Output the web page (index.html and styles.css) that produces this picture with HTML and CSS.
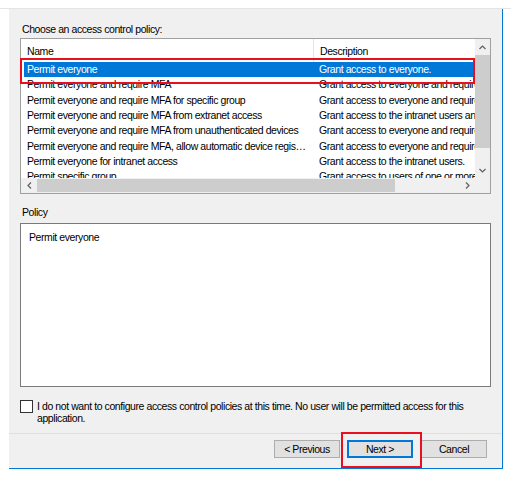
FILE: index.html
```html
<!DOCTYPE html>
<html>
<head>
<meta charset="utf-8">
<title>Access control policy</title>
<link rel="stylesheet" href="styles.css">
</head>
<body>
<div class="page">
  <div class="panel">
    <div class="content">
      <div class="label">Choose an access control policy:</div>
      <div class="list">
        <div class="list-view">
          <div class="header">
            <div class="cell name">Name</div>
            <div class="cell desc divider">Description</div>
          </div>
          <div class="row selected">
            <div class="cell name">Permit everyone</div>
            <div class="cell desc">Grant access to everyone.</div>
          </div>
          <div class="row">
            <div class="cell name">Permit everyone and require MFA</div>
            <div class="cell desc">Grant access to everyone and require MFA.</div>
          </div>
          <div class="row">
            <div class="cell name">Permit everyone and require MFA for specific group</div>
            <div class="cell desc">Grant access to everyone and require MFA for specific group.</div>
          </div>
          <div class="row">
            <div class="cell name">Permit everyone and require MFA from extranet access</div>
            <div class="cell desc">Grant access to the intranet users and require MFA from extranet access.</div>
          </div>
          <div class="row">
            <div class="cell name">Permit everyone and require MFA from unauthenticated devices</div>
            <div class="cell desc">Grant access to everyone and require MFA from unauthenticated devices.</div>
          </div>
          <div class="row">
            <div class="cell name">Permit everyone and require MFA, allow automatic device registration</div>
            <div class="cell desc">Grant access to everyone and require MFA, allow automatic device registration.</div>
          </div>
          <div class="row">
            <div class="cell name">Permit everyone for intranet access</div>
            <div class="cell desc">Grant access to the intranet users.</div>
          </div>
          <div class="row">
            <div class="cell name">Permit specific group</div>
            <div class="cell desc">Grant access to users of one or more specified groups.</div>
          </div>
        </div>
        <div class="vscroll">
          <div class="sb-btn"><svg width="7" height="5" viewBox="0 0 7 5"><path d="M0.5 4 L3.5 1 L6.5 4" stroke="#606060" stroke-width="1.2" fill="none"/></svg></div>
          <div class="vthumb"></div>
          <div class="vtrack"></div>
          <div class="sb-btn"><svg width="7" height="5" viewBox="0 0 7 5"><path d="M0.5 1 L3.5 4 L6.5 1" stroke="#606060" stroke-width="1.2" fill="none"/></svg></div>
        </div>
        <div class="hscroll">
          <div class="sb-btn"><svg width="5" height="7" viewBox="0 0 5 7"><path d="M4 0.5 L1 3.5 L4 6.5" stroke="#606060" stroke-width="1.2" fill="none"/></svg></div>
          <div class="hthumb"></div>
          <div class="htrack"></div>
          <div class="sb-btn"><svg width="5" height="7" viewBox="0 0 5 7"><path d="M1 0.5 L4 3.5 L1 6.5" stroke="#606060" stroke-width="1.2" fill="none"/></svg></div>
        </div>
        <div class="corner"></div>
        <div class="mark mark-row"></div>
      </div>
      <div class="label policy-label">Policy</div>
      <div class="policy-box">Permit everyone</div>
      <div class="check-row">
        <span class="checkbox"></span>
        <span class="check-text">I do not want to configure access control policies at this time. No user will be permitted access for this<br>application.</span>
      </div>
    </div>
    <div class="footer">
      <button class="btn">&lt; Previous</button>
      <span class="focus-wrap">
        <button class="btn default">Next &gt;</button>
        <span class="mark mark-next"></span>
      </span>
      <button class="btn">Cancel</button>
    </div>
  </div>
</div>
</body>
</html>
```

FILE: styles.css
```css
html, body {
  margin: 0;
  padding: 0;
  background: #ffffff;
}

body {
  font-family: "Liberation Sans", Arial, sans-serif;
  font-size: 10.5px;
  letter-spacing: -0.42px;
  color: #000000;
}

.page {
  margin-top: 8px;
  border-top: 1px solid #e4e4e4;
  width: 511px;
}

.panel {
  margin-left: 9px;
  width: 493px;
  height: 459px;
  background: #f0f0f0;
  border-right: 1px solid #0078d7;
  border-bottom: 1px solid #0078d7;
  display: flex;
  flex-direction: column;
}

.content {
  flex: 1;
  padding: 14px 11px 0 11px;
}

.label {
  line-height: 13px;
  height: 13px;
  padding-left: 2px;
  white-space: nowrap;
}

.list {
  position: relative;
  margin-top: 2px;
  width: 471px;
  height: 156px;
  box-sizing: border-box;
  border: 1px solid #a0a0a0;
  background: #ffffff;
  display: grid;
  grid-template-columns: 454px 15px;
  grid-template-rows: 139px 15px;
}

.list-view {
  overflow: hidden;
  background: #ffffff;
}

.header {
  display: flex;
  height: 23px;
  align-items: center;
}

.row {
  display: flex;
  height: 15.3px;
  align-items: center;
  margin-left: 3px;
  white-space: nowrap;
}

.cell {
  white-space: nowrap;
  overflow: hidden;
  box-sizing: border-box;
  line-height: 15px;
}

.header .cell {
  padding-top: 2px;
}

.header .name {
  width: 292px;
  padding-left: 6px;
}

.row .name {
  width: 289px;
  padding-left: 3px;
  padding-right: 6px;
  text-overflow: ellipsis;
}

.cell.desc {
  flex: 1;
  padding-left: 6px;
  overflow: hidden;
}

.header .divider {
  border-left: 1px solid #e5e5e5;
  height: 23px;
  line-height: 21px;
}

.row.selected {
  background: #0078d7;
  color: #ffffff;
}

.vscroll {
  grid-column: 2;
  grid-row: 1;
  display: flex;
  flex-direction: column;
  background: #f0f0f0;
}

.sb-btn {
  flex: 0 0 16px;
  display: flex;
  align-items: center;
  justify-content: center;
  background: #f0f0f0;
}

.vthumb {
  flex: 0 0 93px;
  background: #cdcdcd;
}

.vtrack {
  flex: 1;
}

.hscroll {
  grid-column: 1;
  grid-row: 2;
  display: flex;
  background: #f0f0f0;
}

.hthumb {
  flex: 0 0 358px;
  background: #cdcdcd;
  margin: 1px 0;
}

.htrack {
  flex: 1;
}

.corner {
  grid-column: 2;
  grid-row: 2;
  background: #f0f0f0;
}

.mark {
  position: absolute;
  box-sizing: border-box;
  border: 2px solid #e8101e;
  pointer-events: none;
}

.mark-row {
  left: -1px;
  top: 19px;
  width: 455px;
  height: 26px;
}

.policy-label {
  margin-top: 12px;
}

.policy-box {
  margin-top: 4px;
  width: 471px;
  height: 164px;
  box-sizing: border-box;
  border: 1px solid #7a7a7a;
  background: #ffffff;
  padding: 7px 0 0 8px;
  line-height: 13px;
}

.check-row {
  margin-top: 13px;
  display: flex;
  align-items: flex-start;
}

.checkbox {
  flex: 0 0 13px;
  width: 13px;
  height: 13px;
  box-sizing: border-box;
  border: 1px solid #333333;
  background: #ffffff;
}

.check-text {
  margin-left: 4px;
  line-height: 12px;
  white-space: nowrap;
}

.footer {
  height: 35px;
  box-sizing: border-box;
  border-top: 1px solid #dfdfdf;
  padding: 6px 15px 0 0;
  display: flex;
  justify-content: flex-end;
  align-items: flex-start;
  gap: 7px;
}

.btn {
  width: 66px;
  height: 18px;
  margin: 0;
  padding: 0;
  box-sizing: border-box;
  border: 1px solid #adadad;
  background: #e1e1e1;
  font-family: "Liberation Sans", Arial, sans-serif;
  font-size: 10.5px;
  letter-spacing: -0.42px;
  color: #000000;
  line-height: 16px;
  text-align: center;
}

.btn.default {
  border: 1px solid #0078d7;
  box-shadow: inset 0 0 0 1px #0078d7;
}

.focus-wrap {
  position: relative;
  display: block;
  height: 18px;
  margin-right: 1px;
}

.mark-next {
  left: -6px;
  top: -8px;
  width: 81px;
  height: 36px;
}
```
